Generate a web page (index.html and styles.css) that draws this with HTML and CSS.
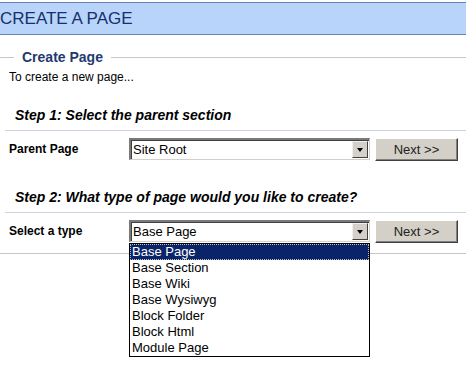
FILE: index.html
```html
<!DOCTYPE html>
<html>
<head>
<meta charset="utf-8">
<link rel="stylesheet" href="styles.css">
</head>
<body>
<div class="header">CREATE A PAGE</div>
<div class="legend-row">
  <div class="legend-line short"></div>
  <div class="legend">Create Page</div>
  <div class="legend-line"></div>
</div>
<div class="intro">To create a new page...</div>
<div class="step">Step 1: Select the parent section</div>
<div class="rule"></div>
<div class="row">
  <div class="label">Parent Page</div>
  <div class="select"><span class="value">Site Root</span><span class="arrow"><span class="tri"></span></span></div>
  <div class="button">Next &gt;&gt;</div>
</div>
<div class="step step2">Step 2: What type of page would you like to create?</div>
<div class="rule"></div>
<div class="row">
  <div class="label">Select a type</div>
  <div class="select-wrap">
    <div class="select"><span class="value">Base Page</span><span class="arrow"><span class="tri"></span></span></div>
    <div class="dropdown">
      <div class="opt sel">Base Page</div>
      <div class="opt">Base Section</div>
      <div class="opt">Base Wiki</div>
      <div class="opt">Base Wysiwyg</div>
      <div class="opt">Block Folder</div>
      <div class="opt">Block Html</div>
      <div class="opt">Module Page</div>
    </div>
  </div>
  <div class="button">Next &gt;&gt;</div>
</div>
<div class="rule bottom"></div>
</body>
</html>
```
FILE: styles.css
```css
html, body { margin: 0; padding: 0; background: #fff; }
body { font-family: "Liberation Sans", Arial, sans-serif; color: #000; width: 466px; min-height: 372px; }
.header {
  margin-top: 2px;
  height: 31px;
  line-height: 31px;
  border-top: 1px solid #6782b4;
  border-bottom: 1px solid #6782b4;
  background: #b8d4fb;
  color: #15306a;
  font-size: 17px;
  padding-left: 0;
}
.legend-row { display: flex; align-items: center; margin-top: 14px; height: 16px; }
.legend-line { flex: 1; height: 1px; background: #c8c8c8; }
.legend-line.short { flex: 0 0 14px; }
.legend { color: #1f3a6e; font-weight: bold; font-size: 14px; padding: 0 8px; }
.intro { font-size: 12px; margin-left: 9px; margin-top: 5px; line-height: 14px; }
.step { font-size: 14px; font-weight: bold; font-style: italic; margin-left: 15px; margin-top: 23px; line-height: 16px; }
.step2 { margin-top: 28px; }
.rule { height: 1px; background: #cdd3e0; margin-left: 5px; margin-top: 7px; }
.rule.bottom { background: #c8c8c8; margin-left: 0; margin-top: 10px; }
.row { display: flex; align-items: center; margin-top: 6px; height: 24px; }
.label { width: 120px; margin-left: 9px; font-size: 12px; font-weight: bold; }
.select-wrap { position: relative; }
.select {
  box-sizing: border-box;
  width: 241px; height: 22px;
  border-top: 2px solid #7a7a7a;
  border-left: 2px solid #7a7a7a;
  border-right: 1px solid #d4d0c8;
  border-bottom: 1px solid #d4d0c8;
  box-shadow: inset 1px 1px 0 #404040;
  background: #fff;
  display: flex; align-items: center; justify-content: space-between;
  font-size: 13px;
}
.value { padding-left: 2px; }
.arrow {
  box-sizing: border-box;
  width: 16px; height: 17px; margin-right: 1px;
  background: #d4d0c8;
  border-top: 1px solid #f0f0f0; border-left: 1px solid #f0f0f0;
  border-right: 1px solid #404040; border-bottom: 1px solid #404040;
  display: flex; align-items: center; justify-content: center;
}
.tri { width: 0; height: 0; border-left: 3.5px solid transparent; border-right: 3.5px solid transparent; border-top: 4px solid #000; }
.button {
  box-sizing: border-box;
  margin-left: 5px;
  width: 83px; height: 23px;
  background: #d4d0c8;
  border-top: 1px solid #fff; border-left: 1px solid #fff;
  border-right: 1px solid #404040; border-bottom: 1px solid #404040;
  box-shadow: inset -1px -1px 0 #808080;
  font-size: 13px; color: #222;
  display: flex; align-items: center; justify-content: center;
}
.dropdown {
  position: absolute; left: 0; top: 23px;
  box-sizing: border-box;
  width: 241px;
  border: 1px solid #000;
  background: #fff;
  z-index: 2;
}
.opt { height: 16px; line-height: 16px; font-size: 13px; padding-left: 2px; }
.opt.sel { background: #0a246a; color: #fff; outline: 1px dotted #c0c0c0; outline-offset: -1px; }
```
